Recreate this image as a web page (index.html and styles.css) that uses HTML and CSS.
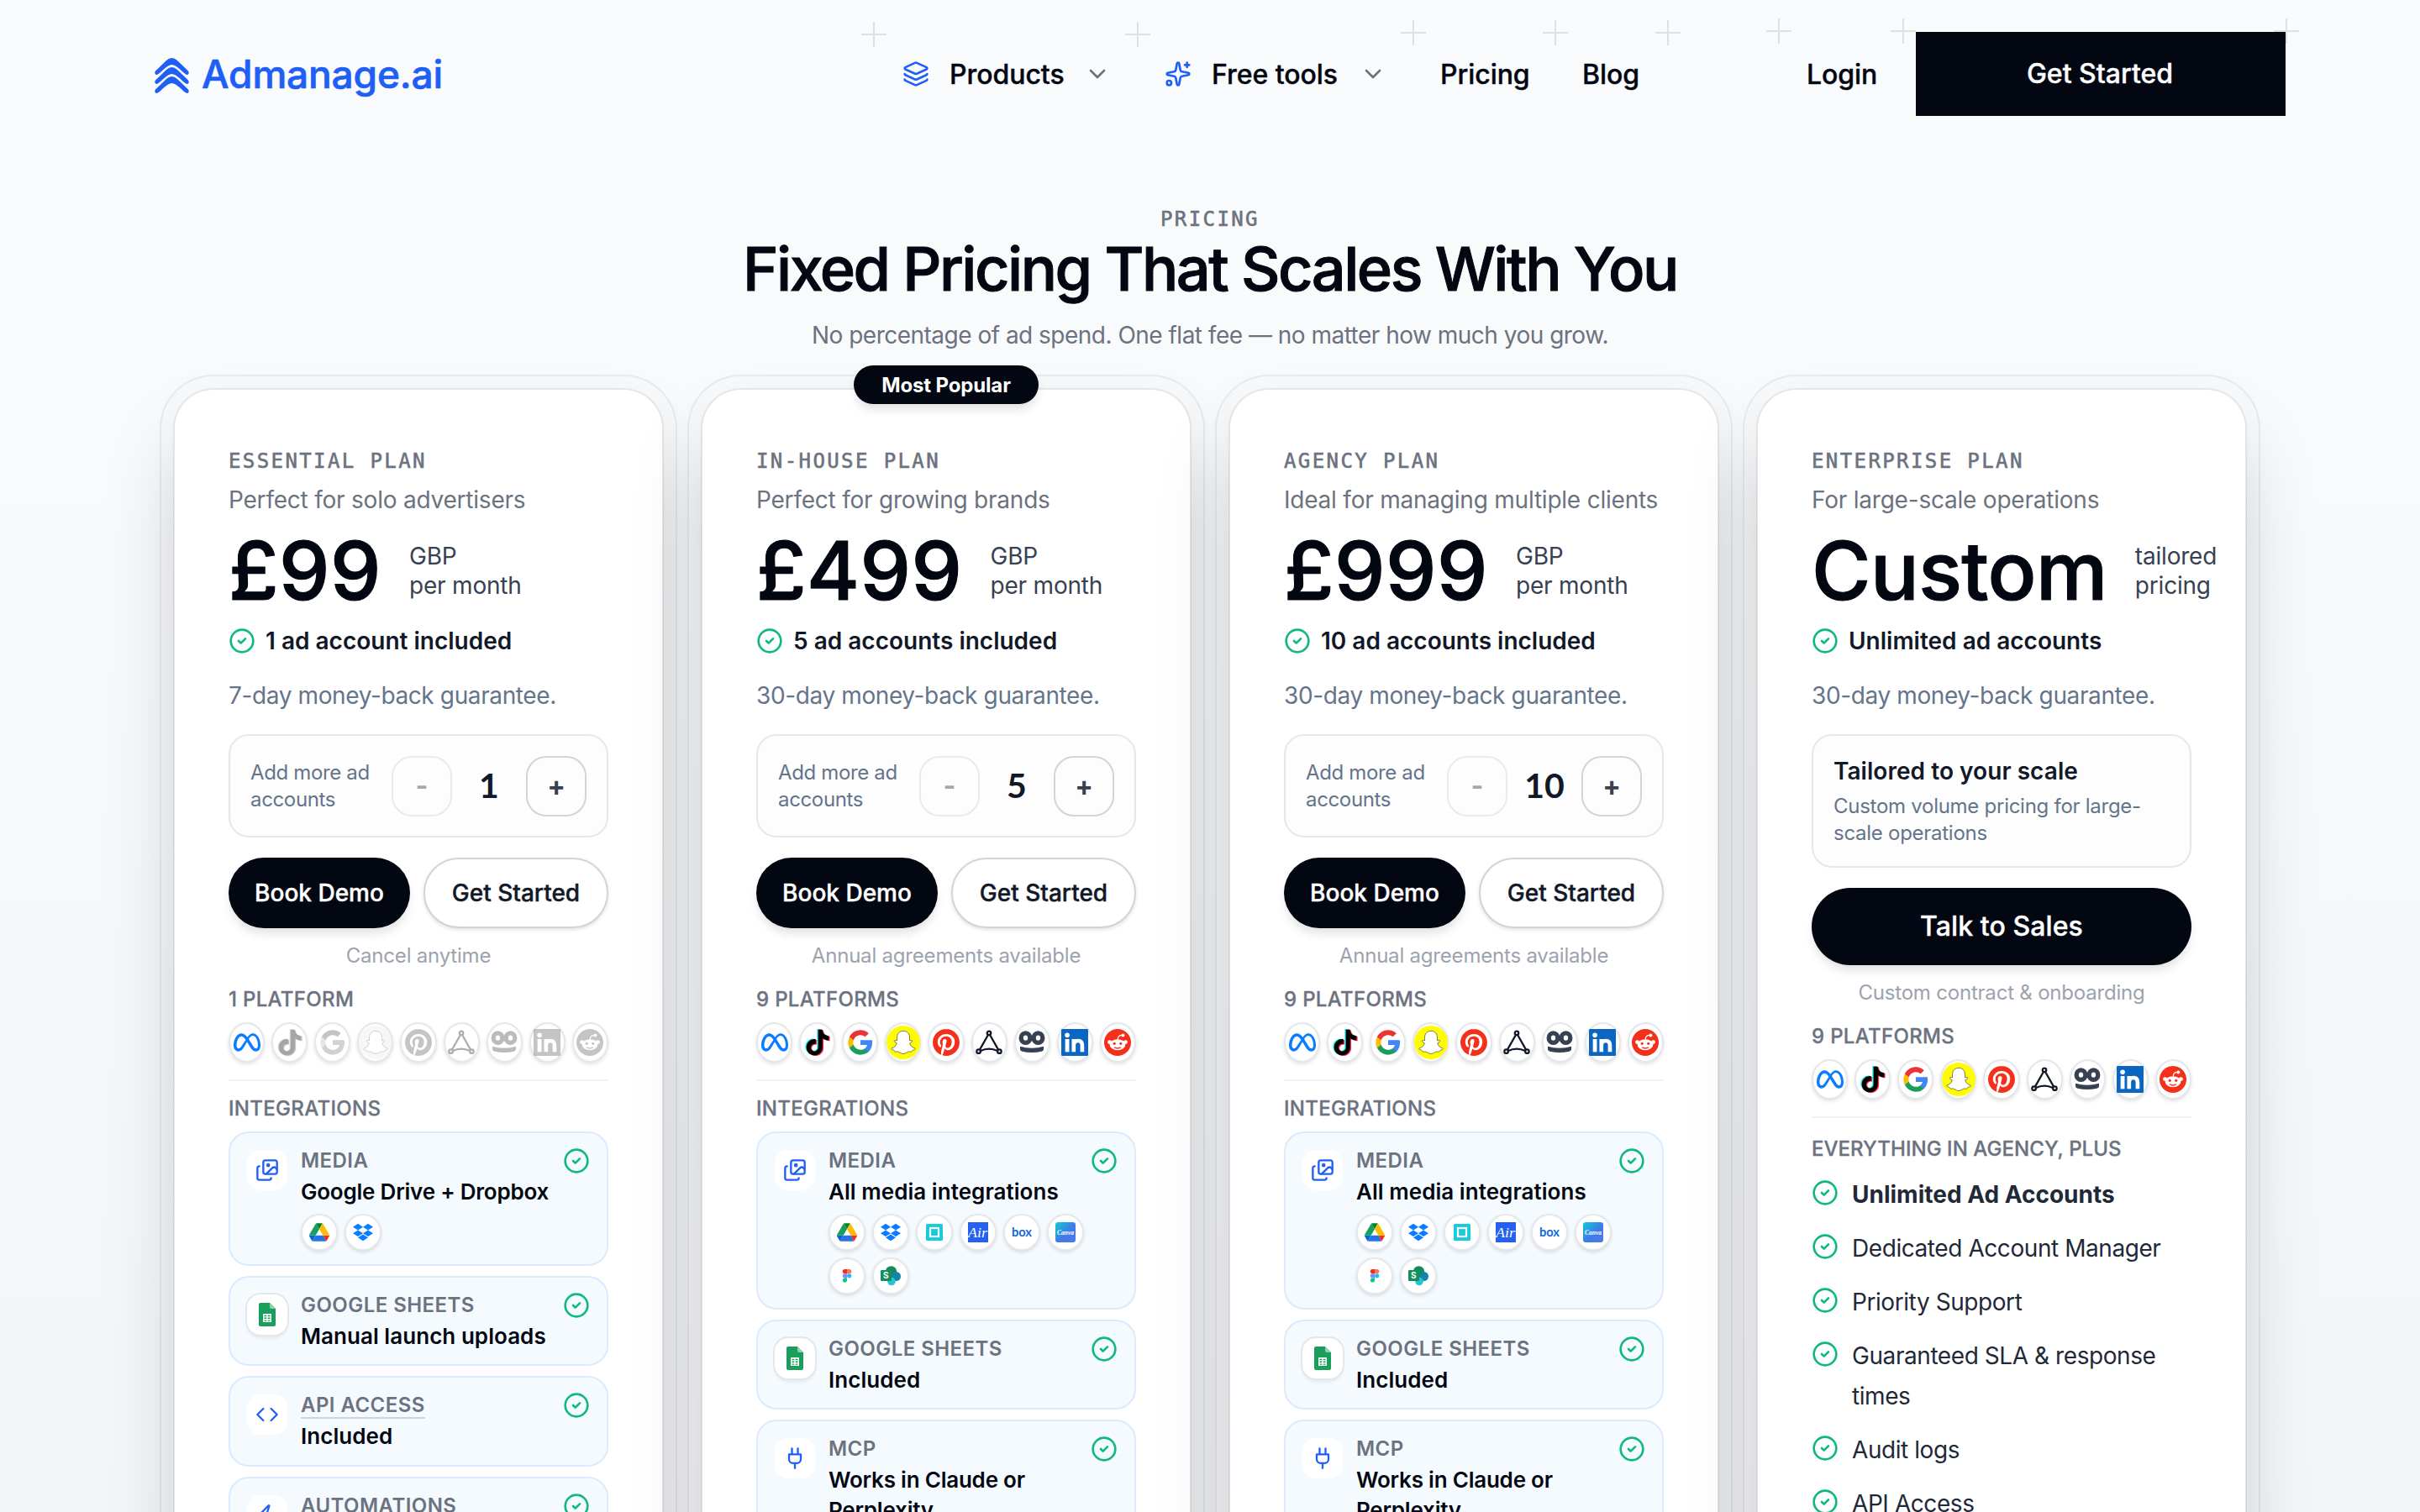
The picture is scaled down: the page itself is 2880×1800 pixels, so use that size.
FILE: index.html
```html
<!DOCTYPE html>
<html lang="en">
<head>
  <meta charset="UTF-8" />
  <meta name="viewport" content="width=device-width, initial-scale=1.0"/>
  <title>Pricing - Admanage.ai</title>
  <link rel="stylesheet" href="styles.css">
</head>
<body>
  <!-- gradients need a rendered svg, the symbols do not -->
  <svg class="defs" aria-hidden="true">
    <linearGradient id="cg" x1="0" y1="0" x2="1" y2="1"><stop offset="0" stop-color="#0ccbd6"/><stop offset=".55" stop-color="#3f7be8"/><stop offset="1" stop-color="#4f78ea"/></linearGradient>
  </svg>

  <!-- icon sprite -->
  <svg class="sprite" aria-hidden="true">
    <symbol id="check" viewBox="0 0 24 24"><circle cx="12" cy="12" r="10"/><path d="m9 12 2 2 4-4"/></symbol>
    <symbol id="chevron" viewBox="0 0 24 24"><path d="m6 9 6 6 6-6"/></symbol>
    <symbol id="layers" viewBox="0 0 24 24"><path d="M12.83 2.18a2 2 0 0 0-1.66 0L2.6 6.08a1 1 0 0 0 0 1.83l8.58 3.91a2 2 0 0 0 1.66 0l8.58-3.9a1 1 0 0 0 0-1.83z"/><path d="M2 12a1 1 0 0 0 .58.91l8.6 3.91a2 2 0 0 0 1.65 0l8.58-3.9A1 1 0 0 0 22 12"/><path d="M2 17a1 1 0 0 0 .58.91l8.6 3.91a2 2 0 0 0 1.65 0l8.58-3.9A1 1 0 0 0 22 17"/></symbol>
    <symbol id="sparkles" viewBox="0 0 24 24"><path d="M11.017 2.814a1 1 0 0 1 1.966 0l1.051 5.558a2 2 0 0 0 1.594 1.594l5.558 1.051a1 1 0 0 1 0 1.966l-5.558 1.051a2 2 0 0 0-1.594 1.594l-1.051 5.558a1 1 0 0 1-1.966 0l-1.051-5.558a2 2 0 0 0-1.594-1.594l-5.558-1.051a1 1 0 0 1 0-1.966l5.558-1.051a2 2 0 0 0 1.594-1.594z"/><path d="M20 2v4M22 4h-4"/><circle cx="4" cy="20" r="2"/></symbol>
    <symbol id="images" viewBox="0 0 24 24"><path d="m22 11-1.296-1.296a2.4 2.4 0 0 0-3.408 0L11 16"/><path d="M4 8a2 2 0 0 0-2 2v10a2 2 0 0 0 2 2h10a2 2 0 0 0 2-2"/><circle cx="13" cy="7" r="1" fill="currentColor"/><rect x="8" y="2" width="14" height="14" rx="2"/></symbol>
    <symbol id="code" viewBox="0 0 24 24"><path d="m16 18 6-6-6-6M8 6l-6 6 6 6"/></symbol>
    <symbol id="plug" viewBox="0 0 24 24"><path d="M12 22v-5M9 8V2M15 8V2M18 8v5a4 4 0 0 1-4 4h-4a4 4 0 0 1-4-4V8Z"/></symbol>
    <symbol id="zap" viewBox="0 0 24 24"><path d="M4 14a1 1 0 0 1-.78-1.63l9.9-10.2a.5.5 0 0 1 .86.46l-1.92 6.02A1 1 0 0 0 13 10h7a1 1 0 0 1 .78 1.63l-9.9 10.2a.5.5 0 0 1-.86-.46l1.92-6.02A1 1 0 0 0 11 14z"/></symbol>
    <symbol id="sheets" viewBox="0 0 20 28"><path d="M2 0h11l7 7v19a2 2 0 0 1-2 2H2a2 2 0 0 1-2-2V2a2 2 0 0 1 2-2z" fill="#1a9e5c"/><path d="M13 0l7 7h-5a2 2 0 0 1-2-2z" fill="#8ed1b1"/><path d="M5 13h10v10H5z" fill="#fff"/><path d="M6.500 14.700h2.800v1.500H6.500zm4.200 0h2.800v1.500h-2.800zm-4.200 2.900h2.800v1.500H6.500zm4.200 0h2.800v1.500h-2.800zm-4.200 2.800h2.800v1.400H6.500zm4.200 0h2.800v1.400h-2.800z" fill="#1a9e5c"/></symbol>

    <symbol id="meta" viewBox="0 0 24 24"><path fill="#0a7cff" d="M6.915 4.03c-1.968 0-3.683 1.28-4.871 3.113C.704 9.208 0 11.883 0 14.449c0 .706.07 1.369.21 1.973a6.624 6.624 0 0 0 .265.86 5.297 5.297 0 0 0 .371.761c.696 1.159 1.818 1.927 3.593 1.927 1.497 0 2.633-.671 3.965-2.444.76-1.012 1.144-1.626 2.663-4.32l.756-1.339.186-.325c.061.1.121.196.183.3l2.152 3.595c.724 1.21 1.665 2.556 2.47 3.314 1.046.987 1.992 1.22 3.06 1.22 1.075 0 1.876-.355 2.455-.843a3.743 3.743 0 0 0 .81-.973c.542-.939.861-2.127.861-3.745 0-2.72-.681-5.357-2.084-7.45-1.282-1.912-2.957-2.93-4.716-2.93-1.047 0-2.088.467-3.053 1.308-.652.57-1.257 1.29-1.82 2.05-.69-.875-1.335-1.547-1.958-2.056-1.182-.966-2.315-1.303-3.454-1.303zm10.16 2.053c1.147 0 2.188.758 2.992 1.999 1.132 1.748 1.647 4.195 1.647 6.4 0 1.548-.368 2.9-1.839 2.9-.58 0-1.027-.23-1.664-1.004-.496-.601-1.343-1.878-2.832-4.358l-.617-1.028a44.908 44.908 0 0 0-1.255-1.98c.07-.109.141-.224.211-.327 1.12-1.667 2.118-2.602 3.358-2.602zm-10.201.553c1.265 0 2.058.791 2.675 1.446.307.327.737.871 1.234 1.579l-1.02 1.566c-.757 1.163-1.882 3.017-2.837 4.338-1.191 1.649-1.81 1.817-2.486 1.817-.524 0-1.038-.237-1.383-.794-.263-.426-.464-1.13-.464-2.046 0-2.221.63-4.535 1.66-6.088.454-.687.964-1.226 1.533-1.533a2.264 2.264 0 0 1 1.088-.285z"/></symbol>
    <path id="note" d="M12.525.02c1.31-.02 2.61-.01 3.91-.02.08 1.53.63 3.09 1.75 4.17 1.12 1.11 2.7 1.62 4.24 1.79v4.03c-1.44-.05-2.89-.35-4.2-.97-.57-.26-1.1-.59-1.62-.93-.01 2.92.01 5.84-.02 8.75-.08 1.4-.54 2.79-1.35 3.94-1.31 1.92-3.58 3.17-5.91 3.21-1.43.08-2.86-.31-4.08-1.03-2.02-1.19-3.44-3.37-3.65-5.71-.02-.5-.03-1-.01-1.49.18-1.9 1.12-3.72 2.58-4.96 1.66-1.44 3.98-2.13 6.15-1.72.02 1.48-.04 2.96-.04 4.44-.99-.32-2.15-.23-3.02.37-.63.41-1.11 1.04-1.36 1.75-.21.51-.15 1.07-.14 1.61.24 1.64 1.82 3.02 3.5 2.87 1.12-.01 2.19-.66 2.77-1.61.19-.33.4-.67.41-1.06.1-1.79.06-3.57.07-5.36.01-4.03-.01-8.05.02-12.07z"/>
    <symbol id="tiktok" viewBox="-0.500 -0.500 25 25"><use href="#note" fill="#25e5e0" x="-1" y="-.5"/><use href="#note" fill="#fe2c55" x="1" y=".6"/><use href="#note" fill="#000"/></symbol>
    <symbol id="google" viewBox="0 0 24 24"><path d="M22.56 12.25c0-.78-.07-1.53-.2-2.25H12v4.26h5.92c-.26 1.37-1.04 2.53-2.21 3.31v2.77h3.57c2.08-1.92 3.28-4.74 3.28-8.09z" fill="#4285f4"/><path d="M12 23c2.97 0 5.46-.98 7.28-2.66l-3.57-2.77c-.98.66-2.23 1.06-3.71 1.06-2.86 0-5.29-1.93-6.16-4.53H2.18v2.84C3.99 20.53 7.7 23 12 23z" fill="#1a9e5c"/><path d="M5.84 14.09c-.22-.69-.35-1.36-.35-2.09s.13-1.43.35-2.09V7.07H2.18C1.43 8.55 1 10.22 1 12s.43 3.45 1.18 4.93l2.85-2.22.81-.62z" fill="#fbbc05"/><path d="M12 5.38c1.62 0 3.06.56 4.21 1.64l3.15-3.15C17.45 2.09 14.97 1 12 1 7.7 1 3.99 3.47 2.18 7.07l3.66 2.84c.87-2.6 3.3-4.53 6.16-4.53z" fill="#ea3335"/></symbol>
    <symbol id="snapchat" viewBox="0 0 24 24"><circle cx="12" cy="12" r="12" fill="#fffc00"/><path fill="#fff" stroke="#222" stroke-width=".35" d="M12 3.800c2.700 0 4.500 2 4.500 4.700v2.200l1.300-.2c.7 0 .9.8.3 1.100l-1.500.9c.5 1.900 1.800 3.100 3.600 3.600.5.2.4.8-.1 1-.9.4-1.600.4-1.800.8s-.2.8-.7.8c-.8 0-1.500-.3-2.400.1-1 .5-1.800 1.300-3.200 1.300s-2.200-.8-3.200-1.300c-.9-.4-1.600-.1-2.400-.1-.5 0-.5-.4-.7-.8s-.9-.4-1.800-.8c-.5-.2-.6-.8-.1-1 1.800-.5 3.100-1.700 3.600-3.600l-1.500-.9c-.6-.3-.4-1.100.3-1.100l1.300.2V8.500c0-2.700 1.800-4.700 4.500-4.700z"/></symbol>
    <symbol id="pinterest" viewBox="0 0 24 24"><path fill="#f5301a" d="M12.017 0C5.396 0 .029 5.367.029 11.987c0 5.079 3.158 9.417 7.618 11.162-.105-.949-.199-2.403.041-3.439.219-.937 1.406-5.957 1.406-5.957s-.359-.72-.359-1.781c0-1.663.967-2.911 2.168-2.911 1.024 0 1.518.769 1.518 1.688 0 1.029-.653 2.567-.992 3.992-.285 1.193.6 2.165 1.775 2.165 2.128 0 3.768-2.245 3.768-5.487 0-2.861-2.063-4.869-5.008-4.869-3.41 0-5.409 2.562-5.409 5.199 0 1.033.394 2.143.889 2.741.099.12.112.225.085.345-.09.375-.293 1.199-.334 1.363-.053.225-.172.271-.401.165-1.495-.69-2.433-2.878-2.433-4.646 0-3.776 2.748-7.252 7.92-7.252 4.158 0 7.392 2.967 7.392 6.923 0 4.135-2.607 7.462-6.233 7.462-1.214 0-2.354-.629-2.758-1.379l-.749 2.848c-.269 1.045-1.004 2.352-1.498 3.146 1.123.345 2.306.535 3.55.535 6.607 0 11.985-5.365 11.985-11.987C23.97 5.39 18.592.026 11.985.026L12.017 0z"/></symbol>
    <symbol id="applovin" viewBox="0 0 24 24"><g fill="none" stroke="#111827" stroke-width="1.700"><circle cx="12" cy="3.600" r="1.700"/><circle cx="2.700" cy="20" r="1.700"/><circle cx="21.300" cy="20" r="1.700"/><path d="M11.200 5.200 3.700 18.500M12.800 5.200l7.500 13.300M4.400 19.500q7.600-3.600 15.200 0"/></g></symbol>
    <symbol id="owl" viewBox="0 0 24 24"><g fill="none" stroke="#374151" stroke-width="4"><ellipse cx="6.400" cy="8" rx="4" ry="4.300"/><ellipse cx="17.600" cy="8" rx="4" ry="4.300"/></g><path d="M1.500 15.500q10.500 3 21 0v2.500q0 1.500-2 2-8.500 2-17 0-2-.5-2-2z" fill="#374151"/></symbol>
    <symbol id="linkedin" viewBox="0 0 24 24"><rect width="24" height="24" rx="1" fill="#0a66c2"/><circle cx="5.300" cy="5.500" r="2.100" fill="#fff"/><rect x="3.500" y="9" width="3.600" height="11.500" fill="#fff"/><path d="M11.100 20.500V9M11.100 14.500q0-4 3.900-4 3.700 0 3.700 4.200v5.800" fill="none" stroke="#fff" stroke-width="3.500"/></symbol>
    <symbol id="reddit" viewBox="0 0 24 24"><circle cx="12" cy="12" r="12" fill="#f5301a"/><g fill="#fff"><ellipse cx="12" cy="14" rx="7" ry="4.900"/><circle cx="4.900" cy="11.700" r="1.800"/><circle cx="19.100" cy="11.700" r="1.800"/><circle cx="16.800" cy="5.600" r="1.500"/></g><path d="M12.200 9.500q0-3.800 3.200-4" fill="none" stroke="#fff" stroke-width=".9"/><circle cx="9.200" cy="13" r="1.200" fill="#f5301a"/><circle cx="14.800" cy="13" r="1.200" fill="#f5301a"/><path d="M9 16.300q3 1.900 6 0" fill="none" stroke="#f5301a" stroke-width="1"/></symbol>

    <symbol id="drive" viewBox="0 0 87.3 78"><path d="m6.6 66.85 3.85 6.65c.8 1.4 1.95 2.5 3.3 3.3l13.75-23.8h-27.5c0 1.55.4 3.1 1.2 4.5z" fill="#0066da"/><path d="m43.65 25-13.75-23.8c-1.35.8-2.5 1.9-3.3 3.3l-25.4 44a9.06 9.06 0 0 0 -1.2 4.5h27.5z" fill="#1a9e5c"/><path d="m73.55 76.8c1.35-.8 2.5-1.9 3.3-3.3l1.6-2.75 7.65-13.25c.8-1.4 1.2-2.95 1.2-4.5h-27.502l5.852 11.5z" fill="#f5301a"/><path d="m43.65 25 13.75-23.8c-1.35-.8-2.9-1.2-4.5-1.2h-18.5c-1.6 0-3.15.45-4.5 1.2z" fill="#00832d"/><path d="m59.8 53h-32.3l-13.75 23.8c1.35.8 2.9 1.2 4.5 1.2h50.8c1.6 0 3.15-.45 4.5-1.2z" fill="#2673e8"/><path d="m73.4 26.5-12.7-22c-.8-1.4-1.95-2.5-3.3-3.3l-13.75 23.8 16.15 28h27.45c0-1.55-.4-3.1-1.2-4.5z" fill="#fbbc04"/></symbol>
    <symbol id="dropbox" viewBox="0 0 24 24"><path fill="#0a7cff" d="M6 1.807L0 5.629l6 3.822 6.001-3.822L6 1.807zM18 1.807l-6 3.822 6 3.822 6-3.822-6-3.822zM0 13.274l6 3.822 6.001-3.822L6 9.452l-6 3.822zM18 9.452l-6 3.822 6 3.822 6-3.822-6-3.822zM6 18.371l6.001 3.822 6-3.822-6-3.822L6 18.371z"/></symbol>
    <symbol id="frame" viewBox="0 0 24 24"><rect x="2" y="2" width="20" height="20" rx="1.500" fill="#16cbdc"/><rect x="7" y="7" width="10" height="10" fill="#16cbdc" stroke="#fff" stroke-width="2.200"/></symbol>
    <symbol id="air" viewBox="0 0 24 24"><rect width="24" height="24" fill="#2461f2"/><text x="0" y="17.500" textLength="23" lengthAdjust="spacingAndGlyphs" class="logo-air">Air</text></symbol>
    <symbol id="box" viewBox="0 0 24 24"><text x="0" y="17" textLength="24" lengthAdjust="spacingAndGlyphs" class="logo-box">box</text></symbol>
    <symbol id="canva" viewBox="0 0 24 24"><rect width="24" height="24" rx="3" fill="url(#cg)"/><text x="12" y="14.500" text-anchor="middle" class="logo-canva">Canva</text></symbol>
    <symbol id="figma" viewBox="0 0 24 24"><path d="M12 4H9.300a2.600 2.600 0 0 0 0 5.200H12z" fill="#f5301a"/><path d="M12 4h2.700a2.600 2.600 0 0 1 0 5.200H12z" fill="#ff7262"/><path d="M12 9.200H9.300a2.600 2.600 0 0 0 0 5.200H12z" fill="#7f8cf8"/><circle cx="14.700" cy="11.800" r="2.600" fill="#1abcfe"/><path d="M12 14.400H9.300A2.600 2.600 0 1 0 12 17z" fill="#0ac97f"/></symbol>
    <symbol id="sharepoint" viewBox="0 0 24 24"><circle cx="12.500" cy="7" r="6.800" fill="#128a5c"/><circle cx="18.500" cy="12.500" r="5.500" fill="#1583a8"/><circle cx="13" cy="18.500" r="4.800" fill="#22c7cf"/><rect y="5" width="13" height="13" rx="1" fill="#15905a"/><text x="6.300" y="15" text-anchor="middle" class="logo-sp">S</text></symbol>
    <symbol id="logo" viewBox="0 0 41 42"><g fill="#1f5ff5"><path id="wing" d="M1 15.500 14 3q6.500-5.800 13 0l13 12.500q1.800 3-.8 4.500-2 .4-8.200-5.800Q24 8 20.500 8T10 14.200Q3.800 20.400 1.800 20-.8 18.500 1 15.500z"/><use href="#wing" y="11"/><use href="#wing" y="22"/></g></symbol>
  </svg>

  <header class="header">
    <a class="brand" href="#"><svg class="brand-icon"><use href="#logo"/></svg><span>Admanage.ai</span></a>
    <nav class="nav">
      <a class="nav-link" href="#"><svg class="icon blue"><use href="#layers"/></svg><span>Products</span><svg class="icon chev"><use href="#chevron"/></svg></a>
      <a class="nav-link tools" href="#"><svg class="icon blue"><use href="#sparkles"/></svg><span>Free tools</span><svg class="icon chev"><use href="#chevron"/></svg></a>
      <a class="nav-link short" href="#">Pricing</a>
      <a class="nav-link short last" href="#">Blog</a>
    </nav>
    <a class="nav-link login" href="#">Login</a>
    <div class="cta-wrap"><a class="cta" href="#">Get Started</a></div>
  </header>

  <main class="pricing">
    <p class="eyebrow">PRICING</p>
    <h1>Fixed Pricing That Scales With You</h1>
    <p class="lead">No percentage of ad spend. One flat fee — no matter how much you grow.</p>

    <div class="plans">
      <!-- Essential -->
      <section class="plan">
        <div class="plan-card">
          <h2 class="plan-name">ESSENTIAL PLAN</h2>
          <p class="plan-desc">Perfect for solo advertisers</p>
          <div class="price"><span class="amount">£99</span><span class="per">GBP<br>per month</span></div>
          <p class="included"><svg class="icon green"><use href="#check"/></svg>1 ad account included</p>
          <p class="guarantee">7-day money-back guarantee.</p>
          <div class="stepper"><span class="stepper-label">Add more ad accounts</span><button class="step off">-</button><b>1</b><button class="step">+</button></div>
          <div class="buttons"><a class="btn dark">Book Demo</a><a class="btn light">Get Started</a></div>
          <p class="note">Cancel anytime</p>
          <h3 class="label">1 PLATFORM</h3>
          <div class="platforms muted">
            <i><svg><use href="#meta"/></svg></i><i><svg><use href="#tiktok"/></svg></i><i><svg><use href="#google"/></svg></i><i><svg class="big"><use href="#snapchat"/></svg></i><i><svg><use href="#pinterest"/></svg></i><i><svg><use href="#applovin"/></svg></i><i><svg><use href="#owl"/></svg></i><i><svg><use href="#linkedin"/></svg></i><i><svg><use href="#reddit"/></svg></i>
          </div>
          <hr>
          <h3 class="label">INTEGRATIONS</h3>
          <div class="features">
            <div class="feature">
              <span class="feature-icon"><svg class="icon"><use href="#images"/></svg></span>
              <div class="feature-text">
                <h4>MEDIA</h4>
                <p class="tight">Google Drive + Dropbox</p>
                <div class="apps"><i><svg><use href="#drive"/></svg></i><i><svg><use href="#dropbox"/></svg></i></div>
              </div>
              <svg class="icon green"><use href="#check"/></svg>
            </div>
            <div class="feature">
              <span class="feature-icon ring"><svg class="sheet"><use href="#sheets"/></svg></span>
              <div class="feature-text"><h4>GOOGLE SHEETS</h4><p>Manual launch uploads</p></div>
              <svg class="icon green"><use href="#check"/></svg>
            </div>
            <div class="feature">
              <span class="feature-icon"><svg class="icon"><use href="#code"/></svg></span>
              <div class="feature-text"><h4><u>API ACCESS</u></h4><p>Included</p></div>
              <svg class="icon green"><use href="#check"/></svg>
            </div>
            <div class="feature">
              <span class="feature-icon"><svg class="icon"><use href="#zap"/></svg></span>
              <div class="feature-text"><h4>AUTOMATIONS</h4></div>
              <svg class="icon green"><use href="#check"/></svg>
            </div>
          </div>
        </div>
      </section>

      <!-- In-house -->
      <section class="plan">
        <span class="badge">Most Popular</span>
        <div class="plan-card">
          <h2 class="plan-name">IN-HOUSE PLAN</h2>
          <p class="plan-desc">Perfect for growing brands</p>
          <div class="price"><span class="amount">£499</span><span class="per">GBP<br>per month</span></div>
          <p class="included"><svg class="icon green"><use href="#check"/></svg>5 ad accounts included</p>
          <p class="guarantee">30-day money-back guarantee.</p>
          <div class="stepper"><span class="stepper-label">Add more ad accounts</span><button class="step off">-</button><b>5</b><button class="step">+</button></div>
          <div class="buttons"><a class="btn dark">Book Demo</a><a class="btn light">Get Started</a></div>
          <p class="note">Annual agreements available</p>
          <h3 class="label">9 PLATFORMS</h3>
          <div class="platforms">
            <i><svg><use href="#meta"/></svg></i><i><svg><use href="#tiktok"/></svg></i><i><svg><use href="#google"/></svg></i><i><svg class="big"><use href="#snapchat"/></svg></i><i><svg><use href="#pinterest"/></svg></i><i><svg><use href="#applovin"/></svg></i><i><svg><use href="#owl"/></svg></i><i><svg><use href="#linkedin"/></svg></i><i><svg><use href="#reddit"/></svg></i>
          </div>
          <hr>
          <h3 class="label">INTEGRATIONS</h3>
          <div class="features">
            <div class="feature">
              <span class="feature-icon"><svg class="icon"><use href="#images"/></svg></span>
              <div class="feature-text">
                <h4>MEDIA</h4>
                <p>All media integrations</p>
                <div class="apps"><i><svg><use href="#drive"/></svg></i><i><svg><use href="#dropbox"/></svg></i><i><svg><use href="#frame"/></svg></i><i><svg><use href="#air"/></svg></i><i><svg><use href="#box"/></svg></i><i><svg><use href="#canva"/></svg></i><i><svg><use href="#figma"/></svg></i><i><svg><use href="#sharepoint"/></svg></i></div>
              </div>
              <svg class="icon green"><use href="#check"/></svg>
            </div>
            <div class="feature">
              <span class="feature-icon ring"><svg class="sheet"><use href="#sheets"/></svg></span>
              <div class="feature-text"><h4>GOOGLE SHEETS</h4><p>Included</p></div>
              <svg class="icon green"><use href="#check"/></svg>
            </div>
            <div class="feature">
              <span class="feature-icon"><svg class="icon"><use href="#plug"/></svg></span>
              <div class="feature-text"><h4>MCP</h4><p class="tight">Works in Claude or Perplexity</p></div>
              <svg class="icon green"><use href="#check"/></svg>
            </div>
          </div>
        </div>
      </section>

      <!-- Agency -->
      <section class="plan">
        <div class="plan-card">
          <h2 class="plan-name">AGENCY PLAN</h2>
          <p class="plan-desc">Ideal for managing multiple clients</p>
          <div class="price"><span class="amount">£999</span><span class="per">GBP<br>per month</span></div>
          <p class="included"><svg class="icon green"><use href="#check"/></svg>10 ad accounts included</p>
          <p class="guarantee">30-day money-back guarantee.</p>
          <div class="stepper"><span class="stepper-label">Add more ad accounts</span><button class="step off">-</button><b>10</b><button class="step">+</button></div>
          <div class="buttons"><a class="btn dark">Book Demo</a><a class="btn light">Get Started</a></div>
          <p class="note">Annual agreements available</p>
          <h3 class="label">9 PLATFORMS</h3>
          <div class="platforms">
            <i><svg><use href="#meta"/></svg></i><i><svg><use href="#tiktok"/></svg></i><i><svg><use href="#google"/></svg></i><i><svg class="big"><use href="#snapchat"/></svg></i><i><svg><use href="#pinterest"/></svg></i><i><svg><use href="#applovin"/></svg></i><i><svg><use href="#owl"/></svg></i><i><svg><use href="#linkedin"/></svg></i><i><svg><use href="#reddit"/></svg></i>
          </div>
          <hr>
          <h3 class="label">INTEGRATIONS</h3>
          <div class="features">
            <div class="feature">
              <span class="feature-icon"><svg class="icon"><use href="#images"/></svg></span>
              <div class="feature-text">
                <h4>MEDIA</h4>
                <p>All media integrations</p>
                <div class="apps"><i><svg><use href="#drive"/></svg></i><i><svg><use href="#dropbox"/></svg></i><i><svg><use href="#frame"/></svg></i><i><svg><use href="#air"/></svg></i><i><svg><use href="#box"/></svg></i><i><svg><use href="#canva"/></svg></i><i><svg><use href="#figma"/></svg></i><i><svg><use href="#sharepoint"/></svg></i></div>
              </div>
              <svg class="icon green"><use href="#check"/></svg>
            </div>
            <div class="feature">
              <span class="feature-icon ring"><svg class="sheet"><use href="#sheets"/></svg></span>
              <div class="feature-text"><h4>GOOGLE SHEETS</h4><p>Included</p></div>
              <svg class="icon green"><use href="#check"/></svg>
            </div>
            <div class="feature">
              <span class="feature-icon"><svg class="icon"><use href="#plug"/></svg></span>
              <div class="feature-text"><h4>MCP</h4><p class="tight">Works in Claude or Perplexity</p></div>
              <svg class="icon green"><use href="#check"/></svg>
            </div>
          </div>
        </div>
      </section>

      <!-- Enterprise -->
      <section class="plan">
        <div class="plan-card">
          <h2 class="plan-name">ENTERPRISE PLAN</h2>
          <p class="plan-desc">For large-scale operations</p>
          <div class="price"><span class="amount word">Custom</span><span class="per">tailored<br>pricing</span></div>
          <p class="included"><svg class="icon green"><use href="#check"/></svg>Unlimited ad accounts</p>
          <p class="guarantee">30-day money-back guarantee.</p>
          <div class="tailored"><strong>Tailored to your scale</strong><p>Custom volume pricing for large-scale operations</p></div>
          <div class="buttons"><a class="btn dark wide">Talk to Sales</a></div>
          <p class="note">Custom contract &amp; onboarding</p>
          <h3 class="label">9 PLATFORMS</h3>
          <div class="platforms">
            <i><svg><use href="#meta"/></svg></i><i><svg><use href="#tiktok"/></svg></i><i><svg><use href="#google"/></svg></i><i><svg class="big"><use href="#snapchat"/></svg></i><i><svg><use href="#pinterest"/></svg></i><i><svg><use href="#applovin"/></svg></i><i><svg><use href="#owl"/></svg></i><i><svg><use href="#linkedin"/></svg></i><i><svg><use href="#reddit"/></svg></i>
          </div>
          <hr>
          <h3 class="label plus">EVERYTHING IN AGENCY, PLUS</h3>
          <ul class="perks">
            <li><svg class="icon green"><use href="#check"/></svg><strong>Unlimited Ad Accounts</strong></li>
            <li><svg class="icon green"><use href="#check"/></svg><span>Dedicated Account Manager</span></li>
            <li><svg class="icon green"><use href="#check"/></svg><span>Priority Support</span></li>
            <li><svg class="icon green"><use href="#check"/></svg><span>Guaranteed SLA &amp; response times</span></li>
            <li><svg class="icon green"><use href="#check"/></svg><span>Audit logs</span></li>
            <li><svg class="icon green"><use href="#check"/></svg><span>API Access</span></li>
          </ul>
        </div>
      </section>
    </div>
  </main>
</body>
</html>
```
FILE: styles.css
```css
* {
  box-sizing: border-box;
}

body {
  margin: 0;
  height: 1800px;
  overflow: hidden;
  font-family: Inter, 'Liberation Sans', sans-serif;
  color: #030712;
  background: linear-gradient(to bottom, #fafbfd, #f9fafc 25%, #f4f5f9);
}

h1, h2, h3, h4, p, ul {
  margin: 0;
  padding: 0;
}

a {
  color: inherit;
  text-decoration: none;
}

i {
  font-style: normal;
}

.sprite {
  display: none;
}

.defs {
  position: absolute;
  width: 0;
  height: 0;
}

.icon {
  width: 32px;
  height: 32px;
  flex: none;
  fill: none;
  stroke: currentColor;
  stroke-width: 2;
  stroke-linecap: round;
  stroke-linejoin: round;
}

.blue {
  color: #1f5ff5;
}

.green {
  color: #10b981;
}

.chev {
  color: #6b7280;
}

/* header */
.header {
  display: flex;
  align-items: center;
  height: 176px;
  padding: 0 160px 0 184px;
}

.brand {
  display: flex;
  align-items: center;
  gap: 15px;
  width: 856px;
  color: #1f5ff5;
  font-size: 46px;
  font-weight: 500;
  letter-spacing: -0.15px;
  -webkit-text-stroke: 0.7px currentColor;
}

.brand-icon {
  width: 41px;
  height: 42px;
  margin-top: 4px;
}

.nav {
  display: grid;
  grid-template-columns: 314px 328px 169px 134px;
  align-items: center;
  margin-right: 132px;
}

.nav-link {
  position: relative;
  display: flex;
  align-items: center;
  height: 94px;
  padding: 0 32px 0 34px;
  font-size: 32px;
  font-weight: 500;
  letter-spacing: -0.05px;
  -webkit-text-stroke: 0.4px currentColor;
}

.nav-link.tools {
  padding-left: 32px;
}

.nav-link span {
  margin: 0 auto 0 24px;
}

.nav-link.short,
.nav-link.login {
  height: 98px;
  padding: 0 0 0 32px;
}

/* crosshair marks on the item corners */
.nav-link::before,
.nav-link.last::after,
.cta-wrap::before,
.cta-wrap::after {
  content: "";
  position: absolute;
  left: -15px;
  top: -15px;
  width: 30px;
  height: 30px;
  background:
    linear-gradient(#dfe0e3, #dfe0e3) center / 30px 2px no-repeat,
    linear-gradient(#dfe0e3, #dfe0e3) center / 2px 30px no-repeat;
}

.nav-link.last::after {
  left: auto;
  right: -15px;
}

.nav-link.login {
  width: 148px;
  height: 102px;
  padding-left: 33px;
}

.cta-wrap {
  position: relative;
  padding: 0 0 0 15px;
  height: 102px;
  display: flex;
  align-items: center;
}

.cta-wrap::after {
  left: auto;
  right: -16px;
}

.cta {
  position: relative;
  width: 440px;
  height: 100px;
  line-height: 100px;
  padding-right: 2px;
  background: #030712;
  color: #fff;
  font-size: 32px;
  font-weight: 500;
  text-align: center;
  -webkit-text-stroke: 0.4px currentColor;
}

/* heading */
.pricing {
  padding: 69px 190px 0;
  text-align: center;
}

.eyebrow,
.plan-name {
  font: 24px/32px 'DejaVu Sans Mono', 'Liberation Mono', monospace;
  letter-spacing: 2.4px;
  color: #6b7280;
  -webkit-text-stroke: 0.6px #6b7280;
}

h1 {
  margin-top: 3px;
  font-size: 72px;
  line-height: 80px;
  font-weight: 500;
  letter-spacing: -2.48px;
  -webkit-text-stroke: 1px currentColor;
}

.lead {
  margin-top: 19px;
  font-size: 28px;
  line-height: 40px;
  letter-spacing: -0.51px;
  color: #6b7280;
}

/* plans */
.plans {
  display: grid;
  grid-template-columns: repeat(4, minmax(0, 1fr));
  gap: 12px;
  margin-top: 27px;
  text-align: left;
}

.plan {
  position: relative;
  height: 1500px;
  padding: 14px;
  border: 2px solid rgba(0, 0, 0, 0.06);
  border-radius: 64px;
  background: rgba(246, 247, 250, 0.4);
}

.plan-card {
  height: 100%;
  padding: 68px 64px 0;
  border: 2px solid rgba(0, 0, 0, 0.07);
  border-radius: 48px;
  background: #fff;
  background-clip: padding-box;
  box-shadow: 0 50px 100px -24px rgba(0, 0, 0, 0.25);
}

.badge {
  position: absolute;
  top: -13px;
  left: 196px;
  z-index: 2;
  width: 220px;
  height: 46px;
  line-height: 47px;
  border-radius: 23px;
  background: #030712;
  color: #fff;
  font-size: 24px;
  font-weight: 650;
  letter-spacing: -0.15px;
  text-align: center;
  box-shadow: 0 8px 12px -2px rgba(0, 0, 0, 0.12);
}

.plan-name {
  line-height: 34px;
}

.plan-desc {
  margin-top: 9px;
  font-size: 28px;
  line-height: 40px;
  letter-spacing: -0.22px;
  white-space: nowrap;
  color: #6b7280;
}

.price {
  display: flex;
  align-items: center;
  gap: 33px;
  margin-top: 16px;
  white-space: nowrap;
}

.amount {
  font-size: 96px;
  line-height: 96px;
  font-weight: 500;
  letter-spacing: 0.5px;
  -webkit-text-stroke: 1.2px currentColor;
}

.amount.word {
  letter-spacing: -0.5px;
}

.per {
  padding-top: 2px;
  font-size: 28px;
  line-height: 35px;
  letter-spacing: -0.2px;
  color: #374151;
}

.included {
  display: flex;
  align-items: center;
  gap: 12px;
  margin-top: 16px;
  font-size: 28px;
  line-height: 40px;
  font-weight: 600;
  color: #111827;
}

.guarantee {
  margin-top: 25px;
  font-size: 28px;
  line-height: 40px;
  letter-spacing: -0.38px;
  color: #64748b;
}

.stepper {
  display: flex;
  align-items: center;
  height: 123px;
  margin-top: 26px;
  padding: 0 24px;
  border: 2px solid #e5e7eb;
  border-radius: 24px;
  background: #fdfdfe;
}

.stepper-label {
  width: 168px;
  font-size: 24px;
  line-height: 32px;
  letter-spacing: -0.35px;
  color: #64748b;
}

.stepper b {
  width: 88px;
  padding-bottom: 2px;
  text-align: center;
  font: bold 41px Lato, sans-serif;
  color: #111827;
}

.step {
  width: 72px;
  height: 72px;
  padding: 0;
  border: 2px solid #d1d5db;
  border-radius: 24px;
  background: transparent;
  font: 700 32px Inter, sans-serif;
  color: #374151;
}

.step.off {
  opacity: 0.45;
}

.tailored {
  height: 159px;
  margin-top: 26px;
  padding: 22px 24px;
  border: 2px solid #e5e7eb;
  border-radius: 24px;
  background: #fdfdfe;
}

.tailored strong {
  display: block;
  font-size: 28px;
  line-height: 40px;
  font-weight: 600;
  letter-spacing: 0.05px;
  color: #111827;
}

.tailored p {
  margin-top: 6px;
  font-size: 24px;
  line-height: 32px;
  letter-spacing: -0.27px;
  color: #64748b;
}

.buttons {
  display: flex;
  gap: 16px;
  margin-top: 24px;
}

.btn {
  width: 220px;
  height: 84px;
  line-height: 84px;
  border-radius: 46px;
  text-align: center;
  font-size: 28px;
  font-weight: 500;
  -webkit-text-stroke: 0.4px currentColor;
}

.btn.dark {
  width: 216px;
  background: #030712;
  color: #fff;
  box-shadow: 0 8px 12px -2px rgba(0, 0, 0, 0.12);
}

.btn.light {
  line-height: 80px;
  border: 2px solid #d1d5db;
  background: #fff;
  color: #111827;
  box-shadow: 0 2px 4px rgba(0, 0, 0, 0.12);
}

.btn.wide {
  width: 100%;
  height: 92px;
  line-height: 92px;
  font-size: 32px;
  letter-spacing: 0.1px;
}

.note {
  margin-top: 16px;
  font-size: 24px;
  line-height: 34px;
  letter-spacing: -0.2px;
  text-align: center;
  color: #9ca3af;
}

.label {
  margin-top: 18px;
  font-size: 24px;
  line-height: 34px;
  font-weight: 500;
  letter-spacing: 0.32px;
  color: #6b7280;
  -webkit-text-stroke: 0.3px currentColor;
}

.platforms {
  display: flex;
  gap: 8px;
  margin-top: 10px;
}

.platforms i {
  display: flex;
  flex: 1 1 0;
  min-width: 0;
  align-items: center;
  justify-content: center;
  height: 48px;
  border: 2px solid #e5e7eb;
  border-radius: 50%;
  background: #fff;
  box-shadow: 0 2px 4px rgba(0, 0, 0, 0.12);
}

.platforms svg {
  flex: none;
  width: 32px;
  height: 32px;
}

.platforms svg.big {
  width: 40px;
  height: 40px;
}

.platforms.muted i:not(:first-child) svg {
  filter: grayscale(1);
  opacity: 0.35;
}

hr {
  height: 2px;
  margin: 20px 0 0;
  border: 0;
  background: #f1f2f6;
}

hr + .label {
  margin-top: 16px;
}

hr + .label.plus {
  margin-top: 20px;
  letter-spacing: 0.05px;
}

/* integration cards */
.features {
  display: grid;
  gap: 12px;
  margin-top: 10px;
}

.feature {
  display: flex;
  padding: 16px 20px 15.5px;
  border: 2px solid #dbeafe;
  border-radius: 24px;
  background: #f5faff;
}

.feature > .icon {
  margin-top: 1px;
}

.feature-icon {
  display: flex;
  flex: none;
  align-items: center;
  justify-content: center;
  width: 48px;
  height: 48px;
  margin-top: 4px;
  border-radius: 16px;
  background: #fff;
  color: #1f5ff5;
}

.feature-icon.ring {
  box-shadow: 0 0 0 2px #e5e7eb, 0 4px 4px rgba(0, 0, 0, 0.08);
}

.feature-icon .icon {
  width: 28px;
  height: 28px;
}

.sheet {
  width: 20px;
  height: 28px;
}

.feature-text {
  width: 328px;
  padding-left: 16px;
}

.feature-text h4 {
  font-size: 24px;
  line-height: 33px;
  font-weight: 600;
  letter-spacing: 0.45px;
  color: #6b7280;
}

.feature-text u {
  text-decoration: none;
  box-shadow: 0 2px 0 #d1d5db;
}

.feature-text p {
  margin-top: 3px;
  font-size: 26px;
  line-height: 36px;
  font-weight: 600;
  letter-spacing: 0.05px;
}

.feature-text p.tight {
  letter-spacing: -0.22px;
}

.apps {
  display: flex;
  flex-wrap: wrap;
  gap: 8px;
  width: 304px;
  margin-top: 8px;
}

.apps i {
  display: flex;
  align-items: center;
  justify-content: center;
  width: 44px;
  height: 44px;
  border: 2px solid #e5e7eb;
  border-radius: 50%;
  background: #fff;
  box-shadow: 0 2px 4px rgba(0, 0, 0, 0.12);
}

.apps svg {
  width: 24px;
  height: 24px;
}

.logo-air {
  font: italic 16px 'Liberation Serif', serif;
  fill: #fff;
}

.logo-box {
  font: bold 16px Lato, sans-serif;
  fill: #1268e0;
}

.logo-canva {
  font: italic bold 7.5px 'Liberation Serif', serif;
  fill: #fff;
}

.logo-sp {
  font: bold 10px Inter, sans-serif;
  fill: #fff;
}

.perks {
  display: grid;
  gap: 16px;
  margin-top: 13px;
  list-style: none;
}

.perks li {
  display: flex;
  gap: 16px;
  font-size: 28px;
  line-height: 48px;
  color: #1f2937;
}

.perks span {
  letter-spacing: -0.43px;
}

.perks .icon {
  margin-top: 6px;
}
```
